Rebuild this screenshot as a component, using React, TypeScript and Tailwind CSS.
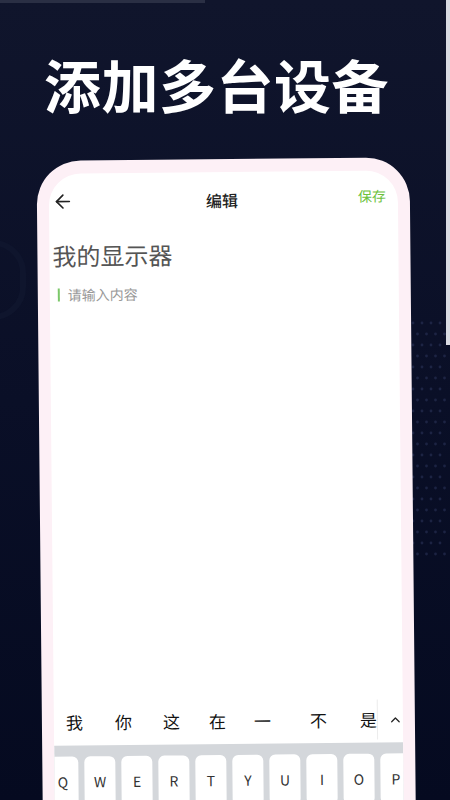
import React from "react";
import { ArrowLeft, ChevronUp } from "lucide-react";

const font = { fontFamily: '"Noto Sans CJK SC", "Noto Sans", sans-serif' };

const candidates = [
    { t: "我", cls: "ml-[12px]" },
    { t: "你", cls: "ml-[32px]" },
    { t: "这", cls: "ml-[31px]" },
    { t: "在", cls: "ml-[29px]" },
    { t: "一", cls: "ml-[28px]" },
    { t: "不", cls: "ml-[39px]" },
    { t: "是", cls: "ml-[33px]" },
];

const keys = ["Q", "W", "E", "R", "T", "Y", "U", "I", "O", "P"];

function Dots() {
    const dots: { x: number; y: number }[] = [];
    for (let r = 0; r < 22; r++) {
        for (let c = 0; c < 4; c++) {
            dots.push({ x: c * 9 + (r % 2) * 4.5, y: r * 11 });
        }
    }
    return (
        <svg width="40" height="250" className="absolute right-[0px] top-[320px] opacity-40">
            {dots.map((d, i) => (
                <circle key={i} cx={d.x + 3} cy={d.y + 3} r="1.4" fill="#3a4470" />
            ))}
        </svg>
    );
}

export default function App() {
    return (
        <div
            className="relative w-[450px] h-[800px] overflow-hidden bg-gradient-to-b from-[#10152c] via-[#0a0f27] to-[#050a20]"
            style={font}
        >
            {/* background decoration */}
            <div className="absolute left-[-40px] top-[240px] w-[66px] h-[80px] rounded-full border-[6px] border-[#0f152d]" />
            <Dots />
            <div className="absolute left-0 top-0 w-[205px] h-[3px] bg-[#2a2f44]" />
            <div className="absolute right-0 top-0 w-[4px] h-[345px] bg-[#d9dbe2]" />

            {/* title */}
            <h1 className="pt-[55px] pl-[44px] text-[57px] leading-[57px] font-bold text-white tracking-[0.5px]">
                添加多台设备
            </h1>

            {/* phone frame */}
            <div className="mt-[47px] ml-[40px] w-[373px] h-[725px] rotate-[-0.55deg] rounded-t-[44px] bg-[#fdf0f6] px-[12px] pt-[13px]">
                <div className="flex flex-col h-full rounded-t-[32px] bg-white overflow-hidden">
                    {/* header */}
                    <div className="relative flex items-center h-[56px] px-[3px]">
                        <ArrowLeft className="w-[22px] h-[22px] text-[#222]" strokeWidth={1.8} />
                        <span className="absolute left-0 right-[3px] text-center text-[16px] font-medium text-[#222]">
                            编辑
                        </span>
                        <span className="ml-auto mr-[9px] mb-[5px] text-[14px] text-[#6cc23c]">保存</span>
                    </div>

                    {/* content */}
                    <div className="px-[3px] pt-[11px]">
                        <div className="text-[24px] leading-[30px] text-[#555]">我的显示器</div>
                        <div className="mt-[15px] ml-[5px] flex items-center gap-[8px]">
                            <div className="w-[2px] h-[13px] bg-[#7cc86a]" />
                            <span className="text-[14px] leading-[18px] text-[#999]">请输入内容</span>
                        </div>
                    </div>

                    <div className="flex-1" />

                    {/* candidate bar */}
                    <div className="relative flex items-center h-[46px]">
                        {candidates.map((c) => (
                            <span key={c.t} className={`${c.cls} text-[17px] leading-[20px] text-[#111]`}>
                                {c.t}
                            </span>
                        ))}
                        <div className="ml-auto mr-[4px] flex items-center h-full">
                            <div className="w-px h-[40px] bg-[#ececec] mr-[10px]" />
                            <ChevronUp className="w-[15px] h-[15px] text-[#222]" strokeWidth={2} />
                        </div>
                    </div>

                    {/* keyboard */}
                    <div className="h-[140px] bg-[#d4d7db] overflow-hidden pt-[11px]">
                        <div className="flex gap-[6px] ml-[-7px]">
                            {keys.map((k) => (
                                <div
                                    key={k}
                                    className="shrink-0 w-[31px] h-[50px] rounded-[6px] bg-white flex items-center justify-center text-[14px] text-[#333]"
                                >
                                    {k}
                                </div>
                            ))}
                        </div>
                    </div>
                </div>
            </div>
        </div>
    );
}
